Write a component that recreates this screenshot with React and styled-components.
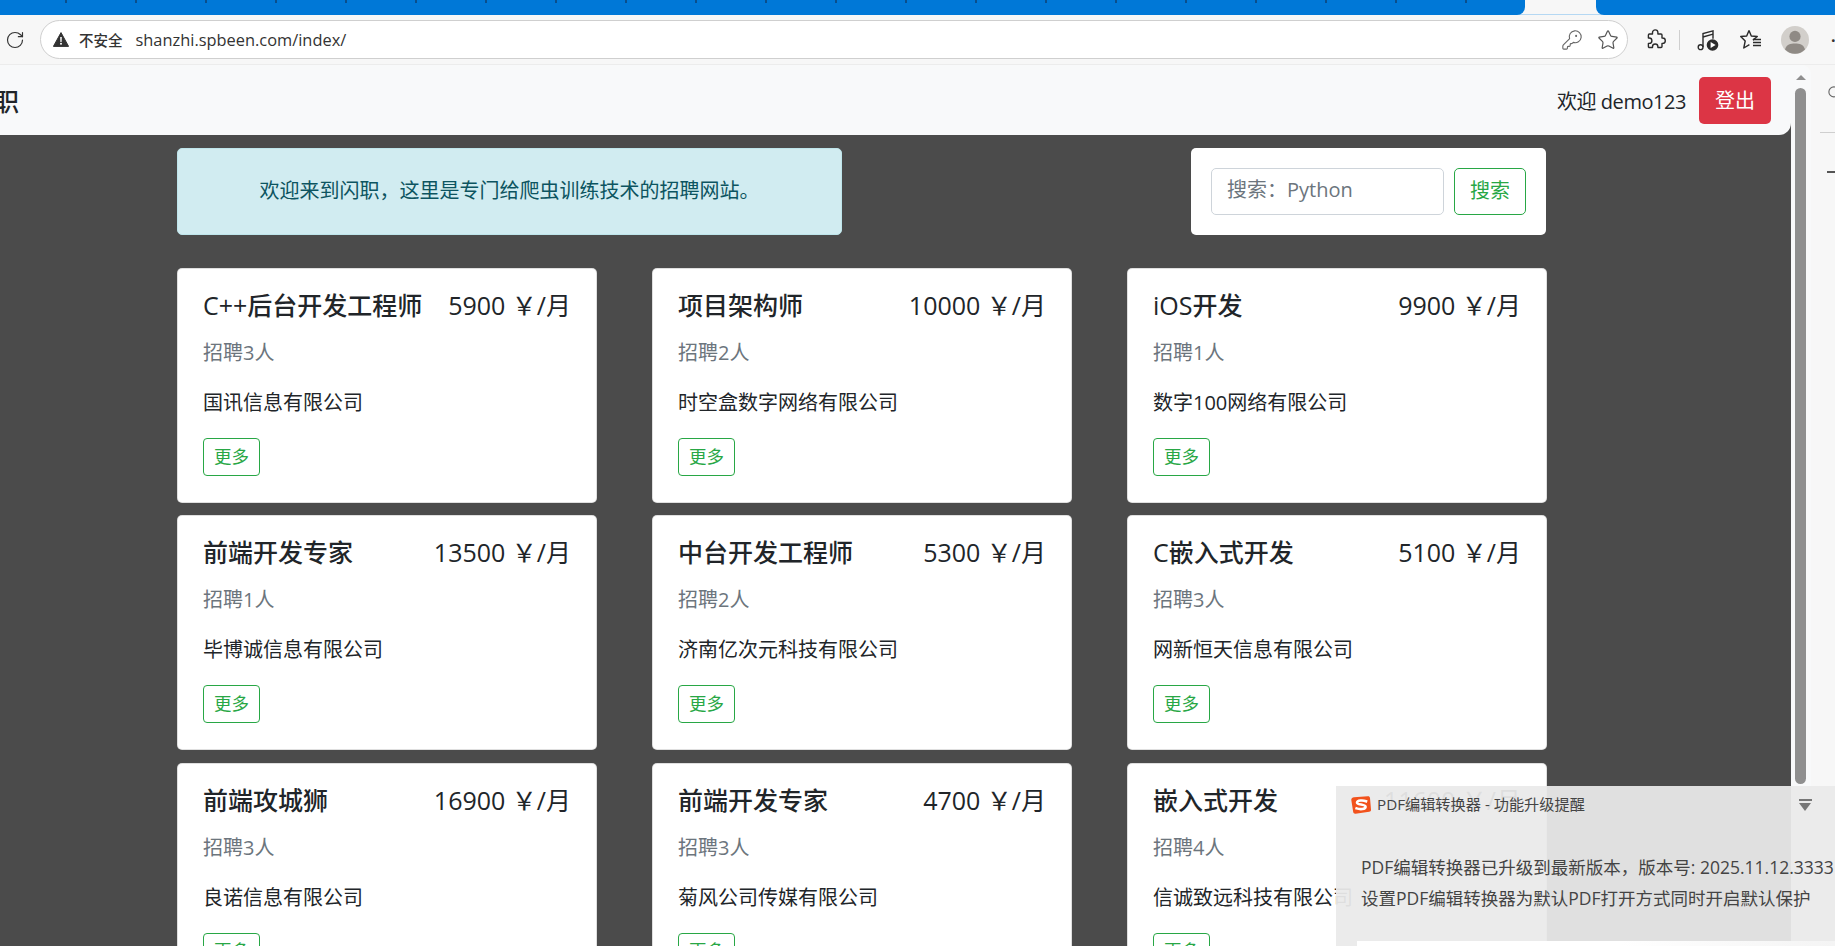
import React from "react";
import styled, { createGlobalStyle } from "styled-components";
import { KeyRound, RotateCw, Search, Star } from "lucide-react";

const jobs = [
  { title: "C++后台开发工程师", salary: 5900, count: 3, company: "国讯信息有限公司" },
  { title: "项目架构师", salary: 10000, count: 2, company: "时空盒数字网络有限公司" },
  { title: "iOS开发", salary: 9900, count: 1, company: "数字100网络有限公司" },
  { title: "前端开发专家", salary: 13500, count: 1, company: "毕博诚信息有限公司" },
  { title: "中台开发工程师", salary: 5300, count: 2, company: "济南亿次元科技有限公司" },
  { title: "C嵌入式开发", salary: 5100, count: 3, company: "网新恒天信息有限公司" },
  { title: "前端攻城狮", salary: 16900, count: 3, company: "良诺信息有限公司" },
  { title: "前端开发专家", salary: 4700, count: 3, company: "菊风公司传媒有限公司" },
  { title: "嵌入式开发", salary: 11600, count: 4, company: "信诚致远科技有限公司" },
];

const tabTicks = Array.from({ length: 21 }, (_, i) => i);

function WarningIcon() {
  return (
    <svg width="16" height="15" viewBox="0 0 16 15">
      <path d="M8 .6 15.6 14.4H.4Z" fill="#333" stroke="#333" strokeLinejoin="round" />
      <path d="M7.2 5h1.6l-.2 5H7.4Z" fill="#fff" />
      <circle cx="8" cy="11.8" r="1" fill="#fff" />
    </svg>
  );
}

function PuzzleIcon() {
  return (
    <svg width="21" height="21" viewBox="0 0 21 21" fill="none" stroke="#2b2b2b" strokeWidth="1.400" strokeLinejoin="round">
      <path d="M7.500 3.600a2.700 2.700 0 0 1 5.400 0V5h3.100a1 1 0 0 1 1 1v3h.6a2.700 2.700 0 0 1 0 5.400H17v3.100a1 1 0 0 1-1 1h-3.100v-.8a2.700 2.700 0 0 0-5.400 0v.8H4.400a1 1 0 0 1-1-1v-3.100h.8a2.700 2.700 0 0 0 0-5.400h-.8V6a1 1 0 0 1 1-1h3.100Z" />
    </svg>
  );
}

function MusicIcon() {
  return (
    <svg width="22" height="22" viewBox="0 0 22 22" fill="none" stroke="#2b2b2b" strokeWidth="1.4">
      <circle cx="3.6" cy="18.2" r="2.4" />
      <path d="M6 18V4.6L16 1.8v8" />
      <path d="M6 8l10-2.8" />
      <circle cx="15.5" cy="16" r="5.8" fill="#2b2b2b" stroke="none" />
      <path d="M13.6 13l5 3-5 3Z" fill="#fff" stroke="none" />
    </svg>
  );
}

function FavoritesIcon() {
  return (
    <svg width="22" height="21" viewBox="0 0 22 21" fill="none" stroke="#2b2b2b" strokeWidth="1.4" strokeLinejoin="round">
      <path d="M9 1.5 11.3 7l6 .5-4.4 3.6" />
      <path d="M9 1.5 6.7 7l-6 .5L5.2 12 3.8 19l5.6-3.4" />
      <path d="M13 10.5h8M13 13.5h8M13 16.5h8" />
    </svg>
  );
}

function AvatarIcon() {
  return (
    <svg width="28" height="28" viewBox="0 0 28 28">
      <circle cx="14" cy="14" r="14" fill="#d2cfcb" />
      <circle cx="14" cy="10.4" r="5.6" fill="#8f8a85" />
      <path d="M4 23.5C5.5 18.5 9.5 17.6 14 17.6s8.500.9 10 5.9A14 14 0 0 1 4 23.5Z" fill="#8f8a85" />
    </svg>
  );
}

function SogouLogo() {
  return (
    <svg width="20" height="18" viewBox="0 0 20 18">
      <path d="M3 1.300 16.800.3c1.300-.1 2 .6 2.200 1.700l1 11.500c.1 1.200-.5 2-1.800 2.200L4.500 17.700c-1.300.1-2-.6-2.300-1.700L.3 4C.1 2.500 1.500 1.400 3 1.300Z" fill="#f2521c" />
      <path d="M15 5.200C12 4 6.300 4.200 6 6.600c-.2 2.400 8.800 1.600 8.600 4.300-.2 2.400-5.400 2.800-9 1.500" fill="none" stroke="#fff" strokeWidth="2.600" strokeLinecap="square" />
    </svg>
  );
}

function App() {
  return (
    <Screen>
      <GlobalStyle />
      <TabStrip>
        <TabGroup $side="left">
          {tabTicks.map((i) => (
            <TabTick key={i} />
          ))}
        </TabGroup>
        <TabGroup $side="right" />
      </TabStrip>
      <Toolbar>
        <ReloadButton>
          <RotateCw size={20} strokeWidth={1.4} color="#333" />
        </ReloadButton>
        <AddressBar>
          <WarningIcon />
          <Insecure>不安全</Insecure>
          <Url>shanzhi.spbeen.com/index/</Url>
          <AddressIcons>
            <KeyRound size={22} strokeWidth={1.2} color="#666" />
            <Star size={22} strokeWidth={1.3} color="#555" />
          </AddressIcons>
        </AddressBar>
        <ToolIcons>
          <PuzzleIcon />
          <ToolDivider />
          <MusicIcon />
          <FavoritesIcon />
          <AvatarIcon />
        </ToolIcons>
        <MoreDots>···</MoreDots>
      </Toolbar>
      <Body>
        <Viewport>
          <Page>
            <Nav>
              <Brand>闪职</Brand>
              <NavUser>
                <Greeting>欢迎 demo123</Greeting>
                <LogoutButton>登出</LogoutButton>
              </NavUser>
            </Nav>
            <Main>
              <TopRow>
                <Notice>欢迎来到闪职，这里是专门给爬虫训练技术的招聘网站。</Notice>
                <SearchCard>
                  <SearchInput placeholder="搜索：Python" />
                  <SearchButton>搜索</SearchButton>
                </SearchCard>
              </TopRow>
              <JobGrid>
                {jobs.map((job) => (
                  <JobCard key={job.title + job.salary}>
                    <CardHead>
                      <JobTitle>{job.title}</JobTitle>
                      <Salary>{job.salary} ￥/月</Salary>
                    </CardHead>
                    <Hiring>招聘{job.count}人</Hiring>
                    <Company>{job.company}</Company>
                    <MoreButton>更多</MoreButton>
                  </JobCard>
                ))}
              </JobGrid>
            </Main>
          </Page>
          <ScrollTrack>
            <ScrollArrow />
            <ScrollThumb />
          </ScrollTrack>
        </Viewport>
        <SidePanel>
          <SideSearch>
            <Search size={15} strokeWidth={1.8} color="#666" />
          </SideSearch>
          <SideRule />
          <SideDash />
        </SidePanel>
      </Body>
      <Toast>
        <ToastHead>
          <SogouLogo />
          <ToastTitle>PDF编辑转换器 - 功能升级提醒</ToastTitle>
          <ToastMenu />
        </ToastHead>
        <ToastBody>
          <ToastLine>PDF编辑转换器已升级到最新版本，版本号: 2025.11.12.3333</ToastLine>
          <ToastLine>设置PDF编辑转换器为默认PDF打开方式同时开启默认保护</ToastLine>
        </ToastBody>
        <ToastSheet />
      </Toast>
    </Screen>
  );
}

export default App;

const GlobalStyle = createGlobalStyle`
  html, body {
    margin: 0;
    padding: 0;
    overflow: hidden;
  }
  * {
    box-sizing: border-box;
  }
  body {
    font-family: "Open Sans", "Noto Sans CJK SC", sans-serif;
    color: #212529;
  }
`;

const Screen = styled.div`
  position: relative;
  width: 1835px;
  height: 946px;
  overflow: hidden;
  display: flex;
  flex-direction: column;
  background: #f7f7f7;
`;

const TabStrip = styled.div`
  height: 15px;
  flex-shrink: 0;
  display: flex;
  justify-content: space-between;
  box-shadow: inset 0 -1px 0 #b5d8f3;
`;

const TabGroup = styled.div`
  width: ${(p) => (p.$side === "left" ? "1525px" : "239px")};
  height: 15px;
  display: flex;
  gap: 68.5px;
  padding-left: 65px;
  overflow: hidden;
  background: #0078d7;
  border-bottom-${(p) => (p.$side === "left" ? "right" : "left")}-radius: 8px;
`;

const TabTick = styled.span`
  width: 1.5px;
  height: 3px;
  flex-shrink: 0;
  background: #0b4f8c;
`;

const Toolbar = styled.div`
  height: 50px;
  flex-shrink: 0;
  display: flex;
  align-items: center;
  border-bottom: 1px solid #ececec;
`;

const ReloadButton = styled.div`
  width: 40px;
  flex-shrink: 0;
  padding-left: 5px;
  display: flex;
  align-items: center;
`;

const AddressBar = styled.div`
  width: 1588px;
  flex-shrink: 0;
  height: 39px;
  display: flex;
  align-items: center;
  padding: 0 8px 0 12px;
  background: #fff;
  border: 1.5px solid #cfcfcf;
  border-radius: 20px;
`;

const Insecure = styled.span`
  margin-left: 10px;
  font-size: 14.500px;
  font-weight: 500;
  color: #333;
`;

const Url = styled.span`
  margin-left: 13px;
  font-size: 16.400px;
  color: #333;
`;

const AddressIcons = styled.div`
  margin-left: auto;
  display: flex;
  align-items: center;
  gap: 14px;
`;

const ToolIcons = styled.div`
  margin-left: 17px;
  flex-shrink: 0;
  display: flex;
  align-items: center;
`;

const ToolDivider = styled.span`
  width: 1px;
  height: 20px;
  margin: 0 17px 0 13px;
  background: #cfcfcf;
  & + svg {
    margin-right: 21px;
  }
  & + svg + svg {
    margin-right: 19px;
  }
`;

const MoreDots = styled.span`
  margin-left: 22px;
  flex-shrink: 0;
  font-size: 16px;
  font-weight: 700;
  color: #333;
`;

const Body = styled.div`
  flex: 1;
  min-height: 0;
  display: flex;
`;

const Viewport = styled.div`
  width: 1811px;
  flex-shrink: 0;
  display: flex;
  overflow: hidden;
  border-top-right-radius: 9px;
  background: #f8f9fa;
`;

const Page = styled.div`
  width: 1791px;
  flex-shrink: 0;
  overflow: hidden;
  background: #4b4b4b;
`;

const Nav = styled.nav`
  height: 70px;
  display: flex;
  align-items: center;
  justify-content: space-between;
  padding-right: 20px;
  background: #f8f9fa;
  border-bottom-right-radius: 12px;
`;

const Brand = styled.span`
  margin-left: -31px;
  font-size: 25px;
  font-weight: 500;
  white-space: nowrap;
`;

const NavUser = styled.div`
  display: flex;
  align-items: center;
  gap: 13px;
`;

const Greeting = styled.span`
  font-size: 20px;
  letter-spacing: -0.45px;
`;

const LogoutButton = styled.button`
  width: 72px;
  height: 47px;
  padding: 0 0 2px;
  font: inherit;
  font-size: 20px;
  color: #fff;
  background: #dc3545;
  border: none;
  border-radius: 5px;
`;

const Main = styled.main`
  padding: 13px 0 0 177px;
`;

const TopRow = styled.div`
  width: 1369px;
  height: 87px;
  display: flex;
  justify-content: space-between;
`;

const Notice = styled.div`
  width: 665px;
  display: flex;
  align-items: center;
  justify-content: center;
  padding-bottom: 4px;
  font-size: 20px;
  color: #0c5460;
  background: #d1ecf1;
  border: 1px solid #bee5eb;
  border-radius: 5px;
`;

const SearchCard = styled.div`
  width: 355px;
  display: flex;
  align-items: center;
  gap: 10px;
  padding: 0 20px;
  background: #fff;
  border-radius: 5px;
`;

const SearchInput = styled.input`
  width: 233px;
  height: 47px;
  padding: 0 15px 4px;
  font: inherit;
  font-size: 20px;
  color: #495057;
  background: #fff;
  border: 1px solid #ced4da;
  border-radius: 5px;
  &::placeholder {
    color: #6c757d;
    opacity: 1;
  }
`;

const SearchButton = styled.button`
  width: 72px;
  height: 47px;
  padding: 0 0 4px;
  font: inherit;
  font-size: 20px;
  color: #28a745;
  background: #fff;
  border: 1px solid #28a745;
  border-radius: 5px;
`;

const JobGrid = styled.div`
  margin-top: 33px;
  display: grid;
  grid-template-columns: repeat(3, 420px);
  grid-auto-rows: 235px;
  column-gap: 55px;
  row-gap: 12.400px;
`;

const JobCard = styled.div`
  display: flex;
  flex-direction: column;
  align-items: flex-start;
  padding: 0 25px;
  background: #fff;
  border: 1px solid rgba(0, 0, 0, 0.125);
  border-radius: 5px;
`;

const CardHead = styled.div`
  width: 100%;
  margin-top: 18px;
  display: flex;
  align-items: center;
  justify-content: space-between;
  line-height: 36px;
  white-space: nowrap;
`;

const JobTitle = styled.span`
  font-size: 25px;
  font-weight: 500;
`;

const Salary = styled.span`
  font-size: 25px;
`;

const Hiring = styled.div`
  margin-top: 15px;
  font-size: 20px;
  line-height: 30px;
  color: #6c757d;
`;

const Company = styled.div`
  margin-top: 20px;
  font-size: 20px;
  line-height: 30px;
`;

const MoreButton = styled.button`
  width: 57px;
  height: 38px;
  margin-top: 20px;
  padding: 0 0 4px;
  font: inherit;
  font-size: 17.500px;
  color: #28a745;
  background: #fff;
  border: 1px solid #28a745;
  border-radius: 4px;
`;

const ScrollTrack = styled.div`
  width: 20px;
  flex-shrink: 0;
  padding: 10px 0 0 4px;
`;

const ScrollArrow = styled.div`
  width: 0;
  margin-left: 0.500px;
  border-left: 5px solid transparent;
  border-right: 5px solid transparent;
  border-bottom: 5px solid #8f8f8f;
`;

const ScrollThumb = styled.div`
  width: 11px;
  height: 696px;
  margin-top: 8px;
  background: #8f8f8f;
  border-radius: 6px;
`;

const SidePanel = styled.aside`
  flex: 1;
  display: flex;
  flex-direction: column;
  align-items: flex-end;
  padding-top: 18px;
`;

const SideSearch = styled.div`
  height: 15px;
  margin-right: -7px;
`;

const SideRule = styled.div`
  width: 15px;
  height: 1px;
  margin-top: 34px;
  background: #cfcfcf;
`;

const SideDash = styled.div`
  width: 8px;
  height: 1.500px;
  margin-top: 38px;
  background: #555;
`;

const Toast = styled.div`
  position: absolute;
  left: 1336px;
  top: 786px;
  width: 499px;
  height: 160px;
  overflow: hidden;
  background: rgba(234, 234, 234, 0.94);
  color: #444;
`;

const ToastHead = styled.div`
  display: flex;
  align-items: center;
  height: 38px;
  padding: 0 23px 0 15px;
`;

const ToastTitle = styled.span`
  margin-left: 6px;
  padding-bottom: 4px;
  font-size: 15.200px;
`;

const ToastMenu = styled.span`
  margin-left: auto;
  width: 13px;
  height: 12px;
  background: linear-gradient(#777, #777) 0 0 / 13px 2px no-repeat;
  position: relative;
  &::after {
    content: "";
    position: absolute;
    left: 0;
    top: 4px;
    border-left: 6.500px solid transparent;
    border-right: 6.500px solid transparent;
    border-top: 8px solid #777;
  }
`;

const ToastBody = styled.div`
  padding: 28px 0 0 25px;
  white-space: nowrap;
`;

const ToastLine = styled.div`
  font-size: 17.500px;
  line-height: 30.500px;
`;

const ToastSheet = styled.div`
  position: absolute;
  left: 21px;
  right: 0;
  bottom: 0;
  height: 5px;
  background: linear-gradient(90deg, #fff 55%, #f4f4f4);
`;
